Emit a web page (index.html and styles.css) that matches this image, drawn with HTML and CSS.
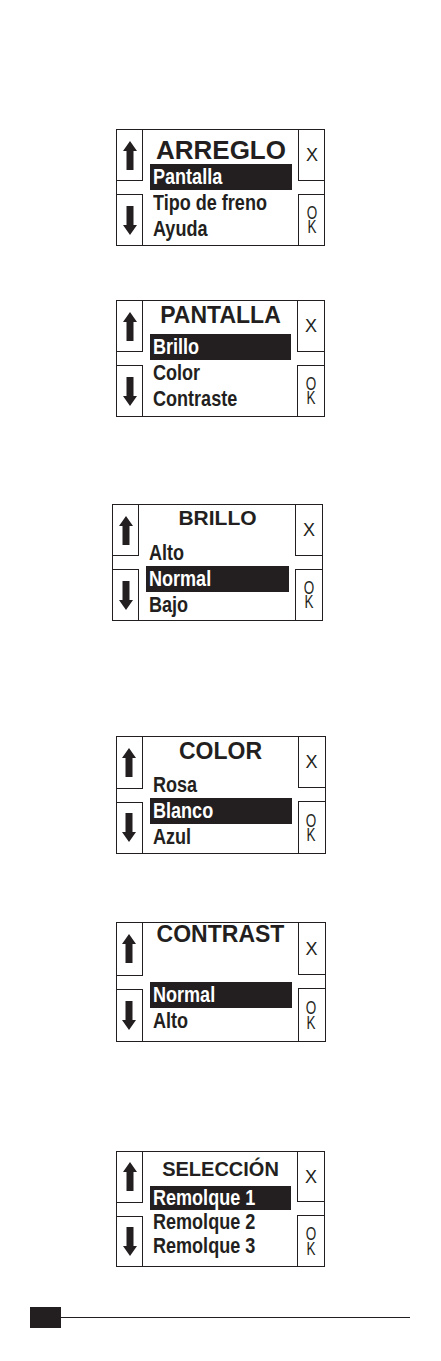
FILE: index.html
```html
<!DOCTYPE html>
<html lang="es">
<head>
    <meta charset="UTF-8">
    <meta name="viewport" content="width=device-width, initial-scale=1.0">
    <title>Menú de arreglo</title>
    <link rel="stylesheet" href="styles.css">
</head>
<body>
    <main class="manual">
        <!-- Menú principal -->
        <figure class="screen screen--arreglo">
            <div class="keys keys--left">
                <div class="key"><svg class="arrow" viewBox="0 0 14 29"><polygon points="7,0 14,10 10.5,10 10.5,29 3.5,29 3.5,10 0,10"/></svg></div>
                <div class="key"><svg class="arrow arrow--down" viewBox="0 0 14 29"><polygon points="7,0 14,10 10.5,10 10.5,29 3.5,29 3.5,10 0,10"/></svg></div>
            </div>
            <div class="display">
                <h2 class="title">ARREGLO</h2>
                <ul class="menu">
                    <li class="selected"><span>Pantalla</span></li>
                    <li><span>Tipo de freno</span></li>
                    <li><span>Ayuda</span></li>
                </ul>
            </div>
            <div class="keys keys--right">
                <div class="key">X</div>
                <div class="key key--ok"><span>O</span><span>K</span></div>
            </div>
        </figure>

        <!-- Pantalla -->
        <figure class="screen screen--pantalla">
            <div class="keys keys--left">
                <div class="key"><svg class="arrow" viewBox="0 0 14 29"><polygon points="7,0 14,10 10.5,10 10.5,29 3.5,29 3.5,10 0,10"/></svg></div>
                <div class="key"><svg class="arrow arrow--down" viewBox="0 0 14 29"><polygon points="7,0 14,10 10.5,10 10.5,29 3.5,29 3.5,10 0,10"/></svg></div>
            </div>
            <div class="display">
                <h2 class="title">PANTALLA</h2>
                <ul class="menu">
                    <li class="selected"><span>Brillo</span></li>
                    <li><span>Color</span></li>
                    <li><span>Contraste</span></li>
                </ul>
            </div>
            <div class="keys keys--right">
                <div class="key">X</div>
                <div class="key key--ok"><span>O</span><span>K</span></div>
            </div>
        </figure>

        <!-- Brillo -->
        <figure class="screen screen--brillo">
            <div class="keys keys--left">
                <div class="key"><svg class="arrow" viewBox="0 0 14 29"><polygon points="7,0 14,10 10.5,10 10.5,29 3.5,29 3.5,10 0,10"/></svg></div>
                <div class="key"><svg class="arrow arrow--down" viewBox="0 0 14 29"><polygon points="7,0 14,10 10.5,10 10.5,29 3.5,29 3.5,10 0,10"/></svg></div>
            </div>
            <div class="display">
                <h2 class="title">BRILLO</h2>
                <ul class="menu">
                    <li><span>Alto</span></li>
                    <li class="selected"><span>Normal</span></li>
                    <li><span>Bajo</span></li>
                </ul>
            </div>
            <div class="keys keys--right">
                <div class="key">X</div>
                <div class="key key--ok"><span>O</span><span>K</span></div>
            </div>
        </figure>

        <!-- Color -->
        <figure class="screen screen--color">
            <div class="keys keys--left">
                <div class="key"><svg class="arrow" viewBox="0 0 14 29"><polygon points="7,0 14,10 10.5,10 10.5,29 3.5,29 3.5,10 0,10"/></svg></div>
                <div class="key"><svg class="arrow arrow--down" viewBox="0 0 14 29"><polygon points="7,0 14,10 10.5,10 10.5,29 3.5,29 3.5,10 0,10"/></svg></div>
            </div>
            <div class="display">
                <h2 class="title">COLOR</h2>
                <ul class="menu">
                    <li><span>Rosa</span></li>
                    <li class="selected"><span>Blanco</span></li>
                    <li><span>Azul</span></li>
                </ul>
            </div>
            <div class="keys keys--right">
                <div class="key">X</div>
                <div class="key key--ok"><span>O</span><span>K</span></div>
            </div>
        </figure>

        <!-- Contraste -->
        <figure class="screen screen--contrast">
            <div class="keys keys--left">
                <div class="key"><svg class="arrow" viewBox="0 0 14 29"><polygon points="7,0 14,10 10.5,10 10.5,29 3.5,29 3.5,10 0,10"/></svg></div>
                <div class="key"><svg class="arrow arrow--down" viewBox="0 0 14 29"><polygon points="7,0 14,10 10.5,10 10.5,29 3.5,29 3.5,10 0,10"/></svg></div>
            </div>
            <div class="display">
                <h2 class="title">CONTRAST</h2>
                <ul class="menu">
                    <li></li>
                    <li class="selected"><span>Normal</span></li>
                    <li><span>Alto</span></li>
                </ul>
            </div>
            <div class="keys keys--right">
                <div class="key">X</div>
                <div class="key key--ok"><span>O</span><span>K</span></div>
            </div>
        </figure>

        <!-- Selección de remolque -->
        <figure class="screen screen--seleccion">
            <div class="keys keys--left">
                <div class="key"><svg class="arrow" viewBox="0 0 14 29"><polygon points="7,0 14,10 10.5,10 10.5,29 3.5,29 3.5,10 0,10"/></svg></div>
                <div class="key"><svg class="arrow arrow--down" viewBox="0 0 14 29"><polygon points="7,0 14,10 10.5,10 10.5,29 3.5,29 3.5,10 0,10"/></svg></div>
            </div>
            <div class="display">
                <h2 class="title">SELECCIÓN</h2>
                <ul class="menu">
                    <li class="selected"><span>Remolque 1</span></li>
                    <li><span>Remolque 2</span></li>
                    <li><span>Remolque 3</span></li>
                </ul>
            </div>
            <div class="keys keys--right">
                <div class="key">X</div>
                <div class="key key--ok"><span>O</span><span>K</span></div>
            </div>
        </figure>
    </main>

    <footer class="page-foot">
        <span class="page-no"></span>
        <span class="rule"></span>
    </footer>
</body>
</html>
```

FILE: styles.css
```css
/* pantallas del menú, tinta negra de imprenta */
body {
    margin: 0;
    padding-top: 129px;
    background: #fff;
    color: #231f20;
    font-family: "Liberation Sans", Arial, sans-serif;
}
.manual {
    display: flex;
    flex-direction: column;
}
.screen {
    display: grid;
    grid-template-columns: 26px 1fr 27px;
    box-sizing: border-box;
    width: 209px;
    height: 117px;
    margin: 0 auto;
    border: 1.5px solid #231f20;
    --head: 33.5px;
    --pad: 7px;
    --title-size: 22px;
    --row: 26px;
}

/* columnas de teclas */
.keys {
    display: flex;
    flex-direction: column;
    gap: 13px;
}
.key {
    flex: 1;
    display: flex;
    flex-direction: column;
    align-items: center;
    justify-content: center;
    font-size: 18px;
    line-height: 18px;
}
.keys--left .key { border-right: 1.5px solid #231f20; }
.keys--right .key { border-left: 1.5px solid #231f20; }
.key:first-child { border-bottom: 1.5px solid #231f20; }
.key:last-child { border-top: 1.5px solid #231f20; }
.key--ok { padding-top: 1px; }
.key--ok span {
    display: block;
    height: 14.5px;
    line-height: 14.5px;
    transform: scaleX(0.75);
}
.arrow {
    width: 14px;
    height: 29px;
    fill: #231f20;
}
.arrow--down {
    transform: rotate(180deg);
}

/* zona de texto */
.display {
    padding: 0 6px 0 7px;
}
.title {
    box-sizing: border-box;
    height: var(--head);
    margin: 0;
    padding-top: var(--pad);
    font-size: var(--title-size);
    line-height: var(--title-size);
    font-weight: bold;
    text-align: center;
    white-space: nowrap;
}
.menu {
    list-style: none;
    margin: 0;
    padding: 0;
}
.menu li {
    height: var(--row);
    line-height: var(--row);
    padding-left: 3px;
    font-size: 22px;
    font-weight: bold;
    white-space: nowrap;
}
/* letra estrecha de la pantalla */
.menu li span {
    display: inline-block;
    transform: scaleX(0.82);
    transform-origin: left center;
}
.menu li.selected {
    background: #231f20;
    color: #fff;
}

/* ajustes de cada pantalla */
.screen--arreglo { --title-size: 26px; --pad: 7px; --head: 33.5px; }
.screen--pantalla {
    margin-top: 54px;
    --title-size: 23px;
    --pad: 2.5px;
    --head: 32.5px;
}
.screen--brillo {
    width: 211px;
    margin: 87px 0 0 112px;
    --title-size: 21px;
    --pad: 2px;
    --head: 34.5px;
}
.screen--color {
    width: 210px;
    height: 118px;
    margin-top: 115px;
    --title-size: 23px;
    --pad: 3px;
    --head: 34.5px;
}
.screen--contrast {
    width: 210px;
    height: 120px;
    margin-top: 68px;
    --title-size: 23px;
    --pad: 0px;
    --head: 32.5px;
}
.screen--seleccion {
    height: 116px;
    margin-top: 109px;
    --title-size: 20px;
    --pad: 7px;
    --head: 33.5px;
    --row: 24px;
}

/* pie de página */
.page-foot {
    display: flex;
    align-items: center;
    margin-top: 40px;
    padding: 0 31px 0 30px;
}
.page-no {
    width: 31px;
    height: 21px;
    background: #231f20;
}
.rule {
    flex: 1;
    height: 1.5px;
    background: #231f20;
}
```
